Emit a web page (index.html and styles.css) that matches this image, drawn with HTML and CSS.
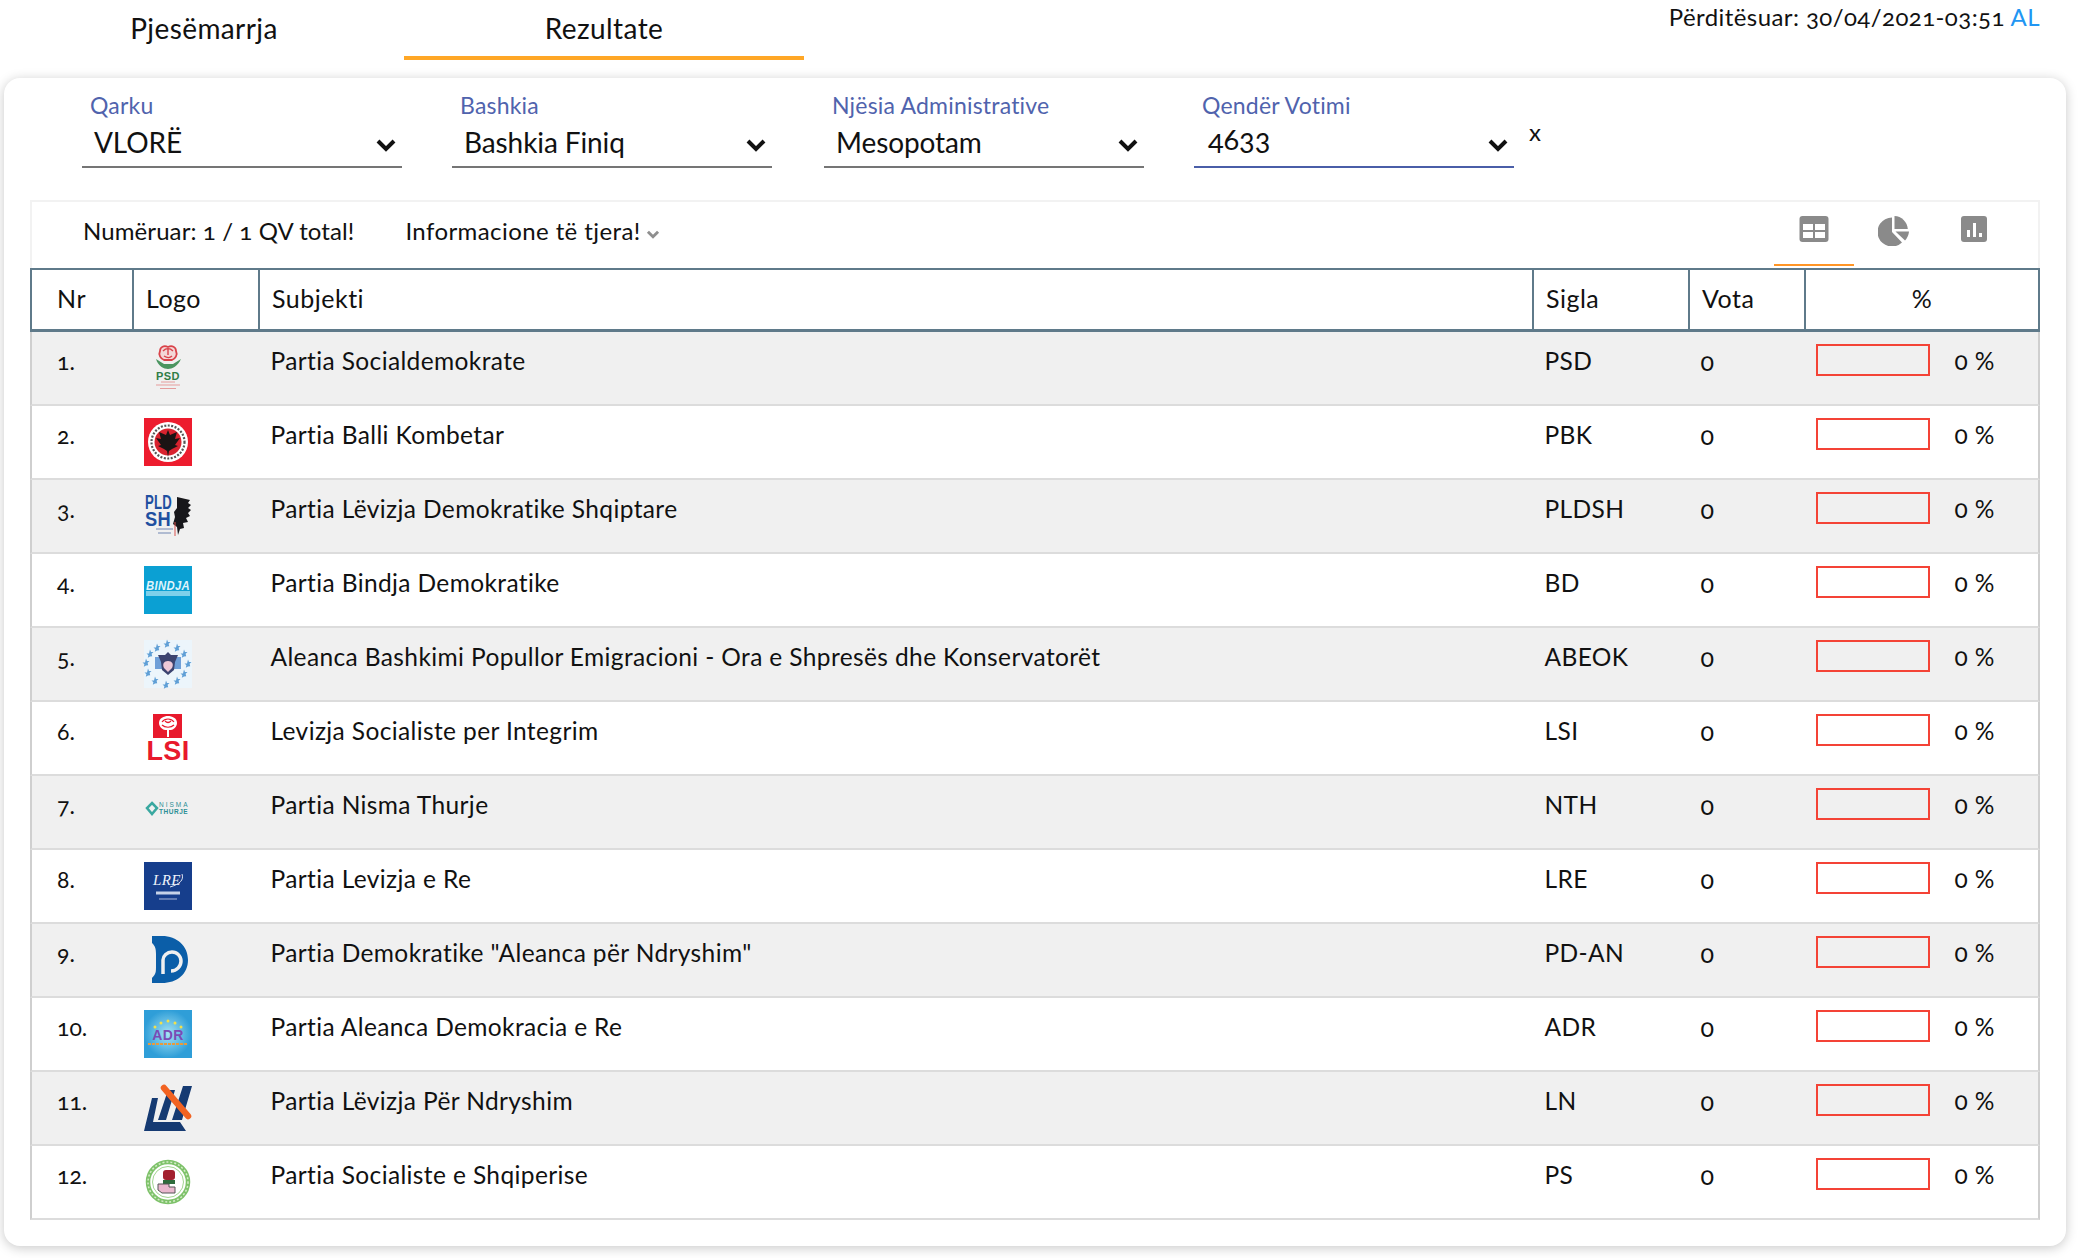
FILE: index.html
```html
<!DOCTYPE html>
<html lang="sq">
<head>
<meta charset="utf-8">
<title>Rezultate</title>
<link rel="stylesheet" href="styles.css">
</head>
<body>
<svg class="defs" width="0" height="0" aria-hidden="true"><defs><path id="star" d="M0-3.500l1 2.400 2.500.2-1.900 1.600.6 2.500L0 3.400l-2.200 1.300.6-2.500-1.900-1.600 2.500-.2z"/></defs></svg>
<header class="top">
  <nav class="tabs">
    <a class="tab">Pjesëmarrja</a>
    <a class="tab tab-active">Rezultate</a>
  </nav>
  <div class="updated">Përditësuar: 30/04/2021-03:51 <a class="lang">AL</a></div>
</header>
<main class="card">
  <section class="filters">
    <div class="filter"><label class="filter-label">Qarku</label><div class="filter-box"><span>VLORË</span><svg class="chev" viewBox="0 0 20 14"><path d="M2 3l8 8 8-8" fill="none" stroke="#111" stroke-width="4"/></svg></div></div>
    <div class="filter"><label class="filter-label">Bashkia</label><div class="filter-box"><span>Bashkia Finiq</span><svg class="chev" viewBox="0 0 20 14"><path d="M2 3l8 8 8-8" fill="none" stroke="#111" stroke-width="4"/></svg></div></div>
    <div class="filter filter-third"><label class="filter-label">Njësia Administrative</label><div class="filter-box"><span>Mesopotam</span><svg class="chev" viewBox="0 0 20 14"><path d="M2 3l8 8 8-8" fill="none" stroke="#111" stroke-width="4"/></svg></div></div>
    <div class="filter"><label class="filter-label">Qendër Votimi</label><div class="filter-box filter-box-active"><span class="digits">4633</span><svg class="chev" viewBox="0 0 20 14"><path d="M2 3l8 8 8-8" fill="none" stroke="#111" stroke-width="4"/></svg></div></div>
    <span class="clear">x</span>
  </section>
  <section class="panel">
    <div class="toolbar">
      <div class="stats">
        <span class="count">Numëruar: 1 / 1 QV total!</span>
        <span class="more">Informacione të tjera!<svg class="chev-small" viewBox="0 0 12 8"><path d="M1.500 1.500L6 6l4.500-4.500" fill="none" stroke="#8f8f8f" stroke-width="2.600"/></svg></span>
      </div>
      <div class="views">
        <div class="view view-active"><svg width="30" height="26" viewBox="0 0 30 26"><rect width="29" height="26" x=".5" rx="3" fill="#8a8a8a"/><path d="M4 8h10v6H4zM16 8h10v6H16zM4 16h10v6H4zM16 16h10v6H16z" fill="#fff"/></svg></div>
        <div class="view"><svg width="32" height="30" viewBox="0 0 32 30"><path d="M14 1.500V16l10 10.500A14.500 14.500 0 1 1 14 1.500z" fill="#8a8a8a"/><path d="M16.500 0A14 14 0 0 1 29.800 13H16.500z" fill="#8a8a8a"/><path d="M17.500 15.500H31a15 15 0 0 1-4 9z" fill="#8a8a8a"/></svg></div>
        <div class="view"><svg width="26" height="26" viewBox="0 0 26 26"><rect width="26" height="26" rx="3" fill="#8a8a8a"/><path d="M6 14h3v7H6zM12 7h3v14h-3zM18 17h3v4h-3z" fill="#fff"/></svg></div>
      </div>
    </div>
    <table class="results">
      <colgroup><col class="c-nr"><col class="c-logo"><col class="c-name"><col class="c-sigla"><col class="c-vota"><col class="c-pct"></colgroup>
      <thead>
        <tr><th>Nr</th><th>Logo</th><th>Subjekti</th><th>Sigla</th><th>Vota</th><th class="th-pct">%</th></tr>
      </thead>
      <tbody>
        <tr><td>1.</td><td class="logo-cell"><svg class="logo" viewBox="0 0 48 48"><path d="M24 3c4-2 8 0 8 4 2 4-1 8-4 9h-8c-3-1-6-5-4-9 0-4 4-6 8-4z" fill="#f3d7d7" stroke="#d9434a" stroke-width="1.800"/><path d="M19 7c3-3 7-3 10 0M20 12c3 2 6 2 8 0M24 5v6" fill="none" stroke="#d9434a" stroke-width="1.400"/><path d="M12 15c2 7 8 10 12 10s10-3 13-10l-8 5h-9z" fill="#4b9560"/><text x="24" y="35.500" class="lt lt-psd">PSD</text><path d="M17 38h14M12 41h24M16 44.500h16" stroke="#e59c9c" stroke-width="1.200"/></svg></td><td>Partia Socialdemokrate</td><td>PSD</td><td class="num">0</td><td class="pct"><div class="bar-row"><div class="bar"></div><span>0 %</span></div></td></tr>
        <tr><td>2.</td><td class="logo-cell"><svg class="logo" viewBox="0 0 48 48"><rect width="48" height="48" fill="#ed1c2e"/><circle cx="24" cy="24" r="20" fill="#fff"/><circle cx="24" cy="24" r="13.500" fill="#d8232f"/><path d="M24 12l2 5 7-3-2 7 5-1-5 7 3 1-6 3-3 2-1 6-1-6-3-2-6-3 3-1-5-7 5 1-2-7 7 3z" fill="#1b1414"/><circle cx="24" cy="24" r="16.500" fill="none" stroke="#555" stroke-width="2.200" stroke-dasharray="2 1.500"/></svg></td><td>Partia Balli Kombetar</td><td>PBK</td><td class="num">0</td><td class="pct"><div class="bar-row"><div class="bar"></div><span>0 %</span></div></td></tr>
        <tr><td>3.</td><td class="logo-cell"><svg class="logo" viewBox="0 0 48 48"><text x="1" y="17" class="lt lt-pld" textLength="27" lengthAdjust="spacingAndGlyphs">PLD</text><text x="1" y="34" class="lt lt-pld" textLength="26" lengthAdjust="spacingAndGlyphs">SH</text><path d="M33 5l13 3-2 3 3 2-3 3 3 2-3 3 2 3-4 2 2 4-5 1 1 5-4 1-2 6-1-8-4-3 2-7-1-5 3-4z" fill="#17171b"/><path d="M31 30v14" stroke="#d9534f" stroke-width="1"/><path d="M12 37h17M14 41h13" stroke="#9aa9c6" stroke-width="1.500"/></svg></td><td>Partia Lëvizja Demokratike Shqiptare</td><td>PLDSH</td><td class="num">0</td><td class="pct"><div class="bar-row"><div class="bar"></div><span>0 %</span></div></td></tr>
        <tr><td>4.</td><td class="logo-cell"><svg class="logo" viewBox="0 0 48 48"><rect width="48" height="48" fill="#0ba0d3"/><text x="2" y="24" class="lt lt-bindja" textLength="44" lengthAdjust="spacingAndGlyphs">BINDJA</text><rect x="2" y="25" width="44" height="5" fill="#7ed0ea"/></svg></td><td>Partia Bindja Demokratike</td><td>BD</td><td class="num">0</td><td class="pct"><div class="bar-row"><div class="bar"></div><span>0 %</span></div></td></tr>
        <tr><td>5.</td><td class="logo-cell"><svg class="logo" viewBox="0 0 48 48"><rect width="48" height="48" fill="#ecf5fb"/><g fill="#5f9fd6"><use href="#star" x="23" y="3"/><use href="#star" x="33" y="7"/><use href="#star" x="40" y="13"/><use href="#star" x="44" y="23"/><use href="#star" x="40" y="33"/><use href="#star" x="33" y="40"/><use href="#star" x="22" y="44"/><use href="#star" x="11" y="40"/><use href="#star" x="4" y="32"/><use href="#star" x="2" y="22"/><use href="#star" x="6" y="13"/><use href="#star" x="13" y="7"/></g><path d="M11 17h8v12h-8zM29 17h8v12h-8z" fill="#6f9fd8"/><path d="M24 12l3 3 7 0-3 7-1 8-6 5-6-5-1-8-3-7 7 0z" fill="#3c4470"/><path d="M24 21c4 0 6 3 4 7l-4 4-4-4c-2-4 0-7 4-7z" fill="#eec9d8"/></svg></td><td>Aleanca Bashkimi Popullor Emigracioni - Ora e Shpresës dhe Konservatorët</td><td>ABEOK</td><td class="num">0</td><td class="pct"><div class="bar-row"><div class="bar"></div><span>0 %</span></div></td></tr>
        <tr><td>6.</td><td class="logo-cell"><svg class="logo" viewBox="0 0 48 48"><rect x="9" y="0" width="29" height="24" fill="#e8192c"/><path d="M24 2c4 0 9 2 9 7 0 4-4 7-6 7h-6c-2 0-6-3-6-7 0-5 5-7 9-7z" fill="#fff"/><path d="M18 8c3-4 9-4 12 0M18 11c3 3 9 3 12 0M21 7c2 2 4 2 6 0" stroke="#e8192c" stroke-width="1.200" fill="none"/><path d="M24 16v7" stroke="#fff" stroke-width="2"/><text x="24" y="46" class="lt lt-lsi">LSI</text></svg></td><td>Levizja Socialiste per Integrim</td><td>LSI</td><td class="num">0</td><td class="pct"><div class="bar-row"><div class="bar"></div><span>0 %</span></div></td></tr>
        <tr><td>7.</td><td class="logo-cell"><svg class="logo" viewBox="0 0 48 48"><path d="M8 15l5 5-5 6-5-6z" fill="none" stroke="#3aa8a0" stroke-width="2.500"/><text x="15" y="19" class="lt lt-nisma" textLength="29">NISMA</text><text x="15" y="26" class="lt lt-thurje" textLength="29">THURJE</text></svg></td><td>Partia Nisma Thurje</td><td>NTH</td><td class="num">0</td><td class="pct"><div class="bar-row"><div class="bar"></div><span>0 %</span></div></td></tr>
        <tr><td>8.</td><td class="logo-cell"><svg class="logo" viewBox="0 0 48 48"><rect width="48" height="48" fill="#163e8c"/><text x="23" y="23" class="lt lt-lre">LRE</text><path d="M38 12c2 6-2 10-12 13" fill="none" stroke="#dfe7f5" stroke-width="1"/><path d="M12 31h24" stroke="#c6d2e8" stroke-width="3"/><path d="M15 37h18" stroke="#7c92c0" stroke-width="1.500"/></svg></td><td>Partia Levizja e Re</td><td>LRE</td><td class="num">0</td><td class="pct"><div class="bar-row"><div class="bar"></div><span>0 %</span></div></td></tr>
        <tr><td>9.</td><td class="logo-cell"><svg class="logo" viewBox="0 0 48 48"><path d="M8 0H18C33 0 44 10 44 24S33 47 18 47H8V42C12 38 12 36 12 30V18C12 12 11 10 8 7Z" fill="#0b5ea8"/><path d="M19 38V24c0-4 4-8 9-8s9 4 9 9-4 10-10 10" fill="none" stroke="#f0f0f0" stroke-width="3.500"/></svg></td><td>Partia Demokratike "Aleanca për Ndryshim"</td><td>PD-AN</td><td class="num">0</td><td class="pct"><div class="bar-row"><div class="bar"></div><span>0 %</span></div></td></tr>
        <tr><td>10.</td><td class="logo-cell"><svg class="logo" viewBox="0 0 48 48"><defs><radialGradient id="adr"><stop offset="0" stop-color="#a5e3f4"/><stop offset="1" stop-color="#2f9ed8"/></radialGradient></defs><rect width="48" height="48" fill="url(#adr)"/><g fill="#f2e04a"><circle cx="11" cy="17" r="1.500"/><circle cx="17" cy="13" r="1.500"/><circle cx="24" cy="11" r="1.500"/><circle cx="31" cy="13" r="1.500"/><circle cx="37" cy="17" r="1.500"/></g><text x="24" y="30" class="lt lt-adr">ADR</text><path d="M4 34h40" stroke="#e89a3c" stroke-width="2" stroke-dasharray="3 1"/></svg></td><td>Partia Aleanca Demokracia e Re</td><td>ADR</td><td class="num">0</td><td class="pct"><div class="bar-row"><div class="bar"></div><span>0 %</span></div></td></tr>
        <tr><td>11.</td><td class="logo-cell"><svg class="logo" viewBox="0 0 48 48"><path d="M0 47L8 14h6L9 38h27l6 9zM14 36L24 6h7L22 36zM28 36L39 2h9L38 36z" fill="#153a72"/><path d="M20 4l24 28" stroke="#f26322" stroke-width="6.500" stroke-linecap="round"/></svg></td><td>Partia Lëvizja Për Ndryshim</td><td>LN</td><td class="num">0</td><td class="pct"><div class="bar-row"><div class="bar"></div><span>0 %</span></div></td></tr>
        <tr><td>12.</td><td class="logo-cell"><svg class="logo" viewBox="0 0 48 48"><circle cx="24" cy="24" r="20" fill="#fff" stroke="#7ec26a" stroke-width="4.500"/><circle cx="24" cy="24" r="20" fill="none" stroke="#d5ecc9" stroke-width="1.500" stroke-dasharray="2 2"/><circle cx="24" cy="24" r="15.500" fill="none" stroke="#a3d592" stroke-width="1"/><rect x="19" y="12" width="12" height="10" rx="3" fill="#a3202e"/><rect x="19" y="22" width="12" height="4" fill="#2e6b3c"/><path d="M14 26h11v3h6v6H18l-4-3z" fill="#eab8cf" stroke="#555" stroke-width="1"/></svg></td><td>Partia Socialiste e Shqiperise</td><td>PS</td><td class="num">0</td><td class="pct"><div class="bar-row"><div class="bar"></div><span>0 %</span></div></td></tr>
      </tbody>
    </table>
  </section>
</main>
</body>
</html>
```
FILE: styles.css
```css
* { box-sizing: border-box; }
html, body { margin: 0; padding: 0; background: #fff; }
body {
  font-family: "Lato", "Open Sans", sans-serif;
  color: #111;
  font-variant-numeric: oldstyle-nums;
  width: 2080px;
  height: 1258px;
  overflow: hidden;
}
.defs { display: block; height: 0; }
.top {
  display: flex;
  justify-content: space-between;
  align-items: flex-start;
  height: 78px;
  padding: 0 40px 0 4px;
}
.tabs { display: flex; }
.tab {
  display: block;
  width: 400px;
  height: 60px;
  padding-top: 11px;
  text-align: center;
  font-size: 28px;
  line-height: 34px;
  letter-spacing: .4px;
}
.tab-active { border-bottom: 4px solid #ffa726; }
.updated {
  margin-top: 4px;
  font-size: 24px;
  line-height: 26px;
  letter-spacing: .42px;
}
.lang { color: #2196f3; }
.card {
  margin-left: 4px;
  width: 2062px;
  height: 1168px;
  padding: 13px 26px 0;
  background: #fff;
  border-radius: 16px;
  box-shadow: 0 2px 12px rgba(0, 0, 0, .22);
}
.filters {
  display: flex;
  gap: 50px;
  height: 109px;
  padding-left: 52px;
}
.filter { width: 320px; }
.filter-third { margin-left: 2px; }
.filter-label {
  display: block;
  padding-left: 8px;
  font-size: 23px;
  line-height: 28px;
  color: #5063ad;
  letter-spacing: .2px;
}
.filter-box {
  display: flex;
  justify-content: space-between;
  align-items: center;
  height: 49px;
  padding: 0 6px 2px 12px;
  font-size: 28px;
  letter-spacing: -.1px;
  border-bottom: 2px solid #757575;
}
.filter-box-active { border-bottom-color: #4a5ea8; }
.digits { font-size: 29px; position: relative; top: -3px; left: 2px; }
.chev { width: 20px; height: 14px; margin-top: 6px; }
.clear {
  margin: 28px 0 0 -35px;
  font-size: 24px;
  line-height: 26px;
}
.panel { width: 2010px; }
.toolbar {
  display: flex;
  justify-content: space-between;
  height: 68px;
  border: 2px solid #f2f2f2;
  border-bottom: 0;
  padding-right: 24px;
}
.stats {
  display: flex;
  gap: 51px;
  padding: 14px 0 0 51px;
  font-size: 24px;
  line-height: 30px;
}
.count { letter-spacing: .1px; }
.more { letter-spacing: .42px; }
.chev-small { width: 14px; height: 9px; margin: 0 0 1px 5px; }
.views { display: flex; }
.view {
  display: flex;
  justify-content: center;
  width: 80px;
  height: 64px;
  padding-top: 14px;
}
.view-active { border-bottom: 2px solid #ff9526; }
.results {
  width: 2010px;
  table-layout: fixed;
  border-collapse: separate;
  border-spacing: 0;
}
.c-nr { width: 104px; }
.c-logo { width: 126px; }
.c-name { width: 1274px; }
.c-sigla { width: 156px; }
.c-vota { width: 116px; }
.c-pct { width: 234px; }
.results th {
  height: 64px;
  padding: 0 0 3px 12px;
  text-align: left;
  font-weight: 400;
  font-size: 25px;
  letter-spacing: .5px;
  border-top: 2px solid #5f7a8a;
  border-bottom: 3px solid #5f7a8a;
  border-right: 2px solid #5f7a8a;
}
.results th:first-child { padding-left: 25px; border-left: 2px solid #5f7a8a; }
.results th.th-pct { padding: 0 0 3px; text-align: center; }
.results td {
  height: 74px;
  padding: 14px 0 0 10.500px;
  vertical-align: top;
  font-size: 24.500px;
  line-height: 30px;
  letter-spacing: .38px;
  border-bottom: 2px solid #dcdcdc;
}
.results td:first-child { padding: 14px 0 0 25px; border-left: 2px solid #cfcfcf; font-size: 23px; letter-spacing: 0; }
.results td:last-child { border-right: 2px solid #cfcfcf; }
.results tbody tr:nth-child(odd) td { background: #f0f0f0; }
.results td.logo-cell { padding: 12px 0 0 10px; }
.results td.num { font-size: 25px; padding-top: 14px; }
.results td.pct { padding-left: 9.500px; }
.logo { display: block; width: 48px; height: 48px; overflow: visible; }
.bar-row { display: flex; align-items: flex-start; gap: 25px; }
.bar { width: 114px; height: 32px; border: 2px solid #f44336; flex: none; margin-top: -2px; }
.lt { font-family: "Liberation Sans", sans-serif; text-anchor: middle; }
.lt-psd { font-size: 11px; font-weight: 700; fill: #2f7d46; }
.lt-pld { font-size: 21px; font-weight: 700; fill: #1e4fa0; text-anchor: start; }
.lt-bindja { font-size: 13px; font-weight: 700; font-style: italic; fill: #dff4fb; text-anchor: start; }
.lt-lsi { font-size: 27px; font-weight: 700; fill: #e8192c; }
.lt-nisma { font-size: 6.500px; fill: #2d8f96; text-anchor: start; }
.lt-thurje { font-size: 6.500px; font-weight: 700; fill: #2d8f96; text-anchor: start; }
.lt-lre { font-size: 15px; font-style: italic; fill: #eef3fb; font-family: "Liberation Serif", serif; }
.lt-adr { font-size: 14px; font-weight: 700; fill: #7a4bb5; }
```
